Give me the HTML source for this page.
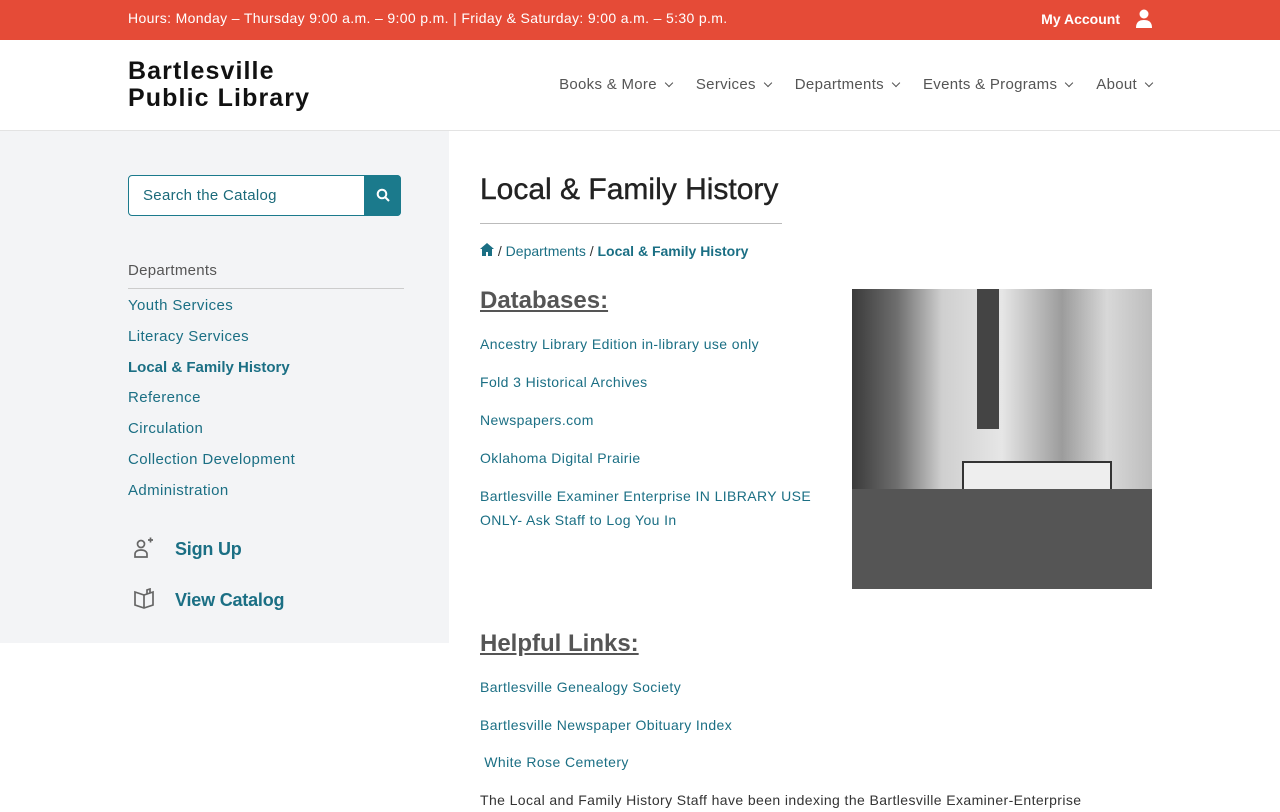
<!DOCTYPE html>
<html><head><meta charset="utf-8"><style>
*{box-sizing:border-box;margin:0;padding:0}
body{width:1280px;height:800px;overflow:hidden;font-family:"Liberation Sans",sans-serif;background:#fff;position:relative}
.top{height:40px;background:#e54b37;color:#fff;font-size:14px;position:relative}
.top .h{position:absolute;left:128px;top:10px;letter-spacing:.35px}
.top .a{position:absolute;right:160px;top:11px;font-weight:bold;font-size:14px}
.hdr{height:91px;border-bottom:1px solid #e3e3e3;position:relative}
.logo{position:absolute;left:128px;top:18px;font-weight:bold;font-size:25px;line-height:27px;color:#111;letter-spacing:1.1px}
.nav{position:absolute;right:128px;top:36px;font-size:15px;color:#555;display:flex;gap:24px;letter-spacing:.3px}
.nav span:after{content:"";display:inline-block;width:5px;height:5px;border-right:1.5px solid #555;border-bottom:1.5px solid #555;transform:rotate(45deg);margin-left:9px;position:relative;top:-3px}
.side{position:absolute;left:0;top:131px;width:449px;height:512px;background:#f3f4f6}
.srch{position:absolute;left:128px;top:44px;width:273px;height:41px;border:1px solid #1b7a8c;border-radius:4px;background:#fff}
.srch span{position:absolute;left:14px;top:11px;font-size:15px;color:#1b6a7a;letter-spacing:.3px}
.srch b{position:absolute;right:-1px;top:-1px;width:37px;height:41px;background:#1b7a8c;border-radius:0 4px 4px 0}
.dep{position:absolute;left:128px;top:131px;width:276px;border-bottom:1px solid #ccc;padding-bottom:9px;font-size:15px;color:#555;letter-spacing:.3px}
.sl{position:absolute;left:128px;font-size:15px;color:#1b6f84;letter-spacing:.4px}
.big{position:absolute;left:175px;font-size:18px;font-weight:bold;color:#1b6f84;letter-spacing:-.2px}
h1{position:absolute;left:480px;top:173px;font-size:30px;font-weight:normal;color:#222;width:302px;border-bottom:1px solid #bbb;padding-bottom:16px;-webkit-text-stroke:.4px #222}
.bc{position:absolute;left:480px;top:243px;font-size:14px;color:#1b6f84}
h2{position:absolute;left:480px;font-size:24px;color:#555;text-decoration:underline;font-weight:bold}
.l{position:absolute;left:480px;font-size:14px;color:#1b6f84;line-height:24px;letter-spacing:.4px}
.photo{position:absolute;left:852px;top:289px;width:300px;height:300px;background:linear-gradient(90deg,#3a3a3a 0,#6e6e6e 15%,#cfcfcf 30%,#e6e6e6 50%,#9c9c9c 70%,#d8d8d8 85%,#bdbdbd 100%)}
</style></head><body>
<div class="top"><div class="h">Hours: Monday – Thursday 9:00 a.m. – 9:00 p.m. | Friday &amp; Saturday: 9:00 a.m. – 5:30 p.m.</div><div class="a">My Account</div>
<svg style="position:absolute;left:1135px;top:9px" width="18" height="20" viewBox="0 0 18 20"><circle cx="9" cy="5" r="4.5" fill="#fff"/><path d="M1 19c0-6 3-8 8-8s8 2 8 8z" fill="#fff"/></svg></div>
<div class="hdr"><div class="logo">Bartlesville<br>Public Library</div>
<div class="nav"><span>Books &amp; More</span><span>Services</span><span>Departments</span><span>Events &amp; Programs</span><span>About</span></div></div>
<div class="side">
<div class="srch"><span>Search the Catalog</span><b><svg style="position:absolute;left:12px;top:13px" width="14" height="14" viewBox="0 0 14 14"><circle cx="6" cy="6" r="4.3" fill="none" stroke="#fff" stroke-width="2"/><path d="M9 9l4 4" stroke="#fff" stroke-width="2"/></svg></b></div>
<div class="dep">Departments</div>
<div class="sl" style="top:166px">Youth Services</div>
<div class="sl" style="top:197px">Literacy Services</div>
<div class="sl" style="top:228px;font-weight:bold;letter-spacing:0">Local &amp; Family History</div>
<div class="sl" style="top:258px">Reference</div>
<div class="sl" style="top:289px">Circulation</div>
<div class="sl" style="top:320px">Collection Development</div>
<div class="sl" style="top:351px">Administration</div>
<svg style="position:absolute;left:133px;top:406px" width="22" height="22" viewBox="0 0 22 22" fill="none" stroke="#666" stroke-width="1.7"><circle cx="8" cy="7" r="3.5"/><path d="M2 20v-3c0-2 2-4 6-4s6 2 6 4v3z"/><path d="M15 3h5M17.5 0.5v5"/></svg>
<div class="big" style="top:408px">Sign Up</div>
<svg style="position:absolute;left:133px;top:457px" width="22" height="22" viewBox="0 0 22 22" fill="none" stroke="#666" stroke-width="1.7"><path d="M2 4l9 3 9-3v13l-9 3-9-3z M11 7v13 M14 6V2l3-1v4"/></svg>
<div class="big" style="top:459px">View Catalog</div>
</div>
<h1>Local &amp; Family History</h1>
<div class="bc"><svg width="14" height="13" viewBox="0 0 14 13"><path d="M7 0L0 6h2v7h4V9h2v4h4V6h2z" fill="#1b6f84"/></svg> <span style="color:#333">/</span> Departments <span style="color:#333">/</span> <b>Local &amp; Family History</b></div>
<h2 style="top:287px">Databases:</h2>
<div class="l" style="top:332px">Ancestry Library Edition in-library use only</div>
<div class="l" style="top:370px">Fold 3 Historical Archives</div>
<div class="l" style="top:408px">Newspapers.com</div>
<div class="l" style="top:446px">Oklahoma Digital Prairie</div>
<div class="l" style="top:484px">Bartlesville Examiner Enterprise IN LIBRARY USE<br>ONLY- Ask Staff to Log You In</div>
<div class="photo"><div style="position:absolute;left:125px;top:0;width:22px;height:140px;background:#444"></div><div style="position:absolute;left:110px;top:172px;width:150px;height:30px;background:#eee;border:2px solid #333"></div><div style="position:absolute;left:0;top:200px;width:300px;height:100px;background:#555"></div></div>
<h2 style="top:630px">Helpful Links:</h2>
<div class="l" style="top:675px">Bartlesville Genealogy Society</div>
<div class="l" style="top:713px">Bartlesville Newspaper Obituary Index</div>
<div class="l" style="top:750px">&nbsp;White Rose Cemetery</div>
<div class="l" style="top:788px;color:#333">The Local and Family History Staff have been indexing the Bartlesville Examiner-Enterprise</div>
</body></html>
